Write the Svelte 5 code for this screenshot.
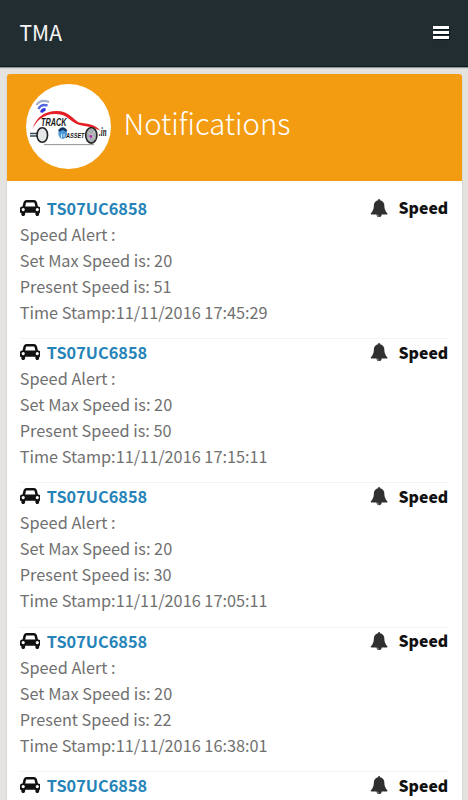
<script lang="ts">
  type Alert = { vehicle: string; details?: string[] };

  const alerts: Alert[] = [
    {
      vehicle: 'TS07UC6858',
      details: ['Speed Alert :', 'Set Max Speed is: 20', 'Present Speed is: 51', 'Time Stamp:11/11/2016 17:45:29']
    },
    {
      vehicle: 'TS07UC6858',
      details: ['Speed Alert :', 'Set Max Speed is: 20', 'Present Speed is: 50', 'Time Stamp:11/11/2016 17:15:11']
    },
    {
      vehicle: 'TS07UC6858',
      details: ['Speed Alert :', 'Set Max Speed is: 20', 'Present Speed is: 30', 'Time Stamp:11/11/2016 17:05:11']
    },
    {
      vehicle: 'TS07UC6858',
      details: ['Speed Alert :', 'Set Max Speed is: 20', 'Present Speed is: 22', 'Time Stamp:11/11/2016 16:38:01']
    },
    { vehicle: 'TS07UC6858' }
  ];
</script>

<div class="app">
  <header class="navbar">
    <span class="brand">TMA</span>
    <button class="menu" aria-label="Menu">
      <span></span>
      <span></span>
      <span></span>
    </button>
  </header>

  <main class="card">
    <div class="card-header">
      <svg class="logo" viewBox="0 0 85 85" aria-hidden="true">
        <circle cx="42.5" cy="42.5" r="42.5" fill="#fff" />
        <g fill="none">
          <path d="M10.5 21Q14.5 14.5 23 18" stroke="#a3aecb" stroke-width="2.2" />
          <path d="M12.5 25Q15 19.5 21.5 21.5" stroke="#5267df" stroke-width="2.4" />
          <path d="M15.5 28.5Q16 25.5 19.5 25.5" stroke="#2330dc" stroke-width="3" />
        </g>
        <path d="M6.5 45C10 33 19 27 30.5 27C43 27 46.5 35 53 38.5C62 39.5 70 41 74 46.5C66 42.5 59 42.5 52 40.5C43 37 42 30.5 30 30C18 29.5 10 37 6.5 45Z" fill="#e51f25" />
        <path d="M18 60.6H68" stroke="#888" stroke-width=".9" />
        <path d="M4 49.5H11M4 52H11" stroke="#344858" stroke-width="1.7" />
        <ellipse cx="16.3" cy="51" rx="5.3" ry="7.3" fill="#e4e7e8" stroke="#222" stroke-width="1.6" />
        <ellipse cx="65.3" cy="51.3" rx="5.6" ry="7.8" fill="#a7adb0" stroke="#222" stroke-width="1.6" />
        <path d="M61.5 48L69.5 55M69 47L62 56" stroke="#d6d6d6" stroke-width=".8" />
        <circle cx="64.8" cy="52.5" r="1.4" fill="#b32bad" />
        <ellipse cx="36.7" cy="49" rx="4.4" ry="6" fill="#4c9ad8" />
        <path d="M33 47Q36.5 42.5 40.5 47" fill="none" stroke="#18305c" stroke-width="2.5" />
        <path d="M35.5 50V54M38 50V53" stroke="#d5ebfa" stroke-width="1" />
        <text class="logo-text" x="15" y="41.7" font-size="10" textLength="25.5" lengthAdjust="spacingAndGlyphs">TRACK</text>
        <text class="logo-text" x="40" y="54" font-size="6.8" textLength="18.5" lengthAdjust="spacingAndGlyphs">ASSET</text>
        <text class="logo-script" x="73" y="52.3" font-size="12" textLength="7.5" lengthAdjust="spacingAndGlyphs">.in</text>
      </svg>
      <h1>Notifications</h1>
    </div>

    <ul class="alerts">
      {#each alerts as alert}
        <li>
          <div class="title">
            <svg class="car" viewBox="0 0 2048 1600" aria-hidden="true">
              <path d="M480 960q0-66-47-113t-113-47-113 47-47 113 47 113 113 47 113-47 47-113zm36-320h1016l-89-357q-2-8-14-17.5t-21-9.5h-768q-9 0-21 9.5t-14 17.5zm1372 320q0-66-47-113t-113-47-113 47-47 113 47 113 113 47 113-47 47-113zm160-96v384q0 14-9 23t-23 9h-96v128q0 80-56 136t-136 56-136-56-56-136v-128h-1024v128q0 80-56 136t-136 56-136-56-56-136v-128h-96q-14 0-23-9t-9-23v-384q0-93 65.5-158.5t158.5-65.5h28l105-419q23-94 104-157.5t179-63.5h768q98 0 179 63.5t104 157.5l105 419h28q93 0 158.5 65.5t65.5 158.5z" />
            </svg>
            <a href="#vehicle">{alert.vehicle}</a>
            <svg class="bell" viewBox="0 0 1792 1792" aria-hidden="true">
              <path d="M912 1696q0-16-16-16-59 0-101.5-42.5t-42.5-101.5q0-16-16-16t-16 16q0 73 51.5 124.5t124.5 51.5q16 0 16-16zm816-288q0 52-38 90t-90 38h-448q0 106-75 181t-181 75-181-75-75-181h-448q-52 0-90-38t-38-90q50-42 91-88t85-119.5 74.5-158.5 50-206 19.5-260q0-152 117-282.5t307-158.5q-8-19-8-39 0-40 28-68t68-28 68 28 28 68q0 20-8 39 190 28 307 158.5t117 282.5q0 139 19.5 260t50 206 74.5 158.5 85 119.5 91 88z" />
            </svg>
            <strong>Speed</strong>
          </div>
          {#each alert.details ?? [] as line}
            <p>{line}</p>
          {/each}
        </li>
      {/each}
    </ul>
  </main>
</div>

<style>
  :global(body) {
    background: #e4e3df;
  }

  .app {
    height: 800px;
    overflow: hidden;
    font-family: 'Noto Sans CJK SC', 'Noto Sans', sans-serif;
    font-size: 16.3px;
    line-height: 26px;
    color: #707070;
  }

  .navbar {
    box-sizing: border-box;
    height: 67px;
    padding: 0 19px 3px 19.5px;
    display: flex;
    align-items: center;
    justify-content: space-between;
    background: #222d32;
    border-bottom: 1px solid #081a24;
    box-shadow: 0 1px 1px #919799;
  }

  .brand {
    font-size: 21px;
    color: #f5f5f5;
  }

  .menu {
    width: 16px;
    margin-top: 2px;
    padding: 0;
    border: 0;
    display: grid;
    gap: 2px;
    background: none;
  }

  .menu span {
    height: 3px;
    background: #fff;
    box-shadow: 0 0 1px 0.5px #071419;
  }

  .card {
    margin: 7px 6.5px 0;
    background: #fff;
    border-radius: 4px 4px 0 0;
    box-shadow: 0 1px 2px rgba(0, 0, 0, 0.15);
  }

  .card-header {
    box-sizing: border-box;
    height: 107px;
    padding: 10px 19.5px;
    display: flex;
    gap: 12.5px;
    background: #f39c12;
    border-radius: 3px 3px 0 0;
  }

  .logo {
    width: 85px;
    height: 85px;
    flex: none;
  }

  .logo-text {
    font-family: 'Liberation Sans', sans-serif;
    font-weight: 700;
    font-style: italic;
    fill: #171717;
  }

  .logo-script {
    font-family: 'Liberation Serif', serif;
    font-weight: 700;
    font-style: italic;
    fill: #171717;
  }

  h1 {
    margin: 18px 0 0;
    font-size: 29.2px;
    font-weight: 300;
    line-height: 40px;
    color: #fff;
  }

  .alerts {
    margin: 0;
    padding: 13.7px 13.3px;
    list-style: none;
  }

  li {
    min-height: 130px;
    padding-bottom: 13.4px;
    border-bottom: 1px solid #f3f3f3;
  }

  .title {
    height: 26px;
    display: flex;
    align-items: center;
    font-weight: 700;
  }

  .title a {
    margin: 0 auto 0 6.5px;
    color: #2583b8;
    text-decoration: none;
  }

  .title strong {
    padding-top: 1.2px;
    font-size: 15.8px;
    color: #111;
  }

  .car {
    width: 20.5px;
    height: 16px;
    fill: #111;
  }

  .bell {
    width: 18.2px;
    height: 18.2px;
    margin-right: 10.2px;
    fill: #303030;
  }

  p {
    margin: 0;
  }
</style>
